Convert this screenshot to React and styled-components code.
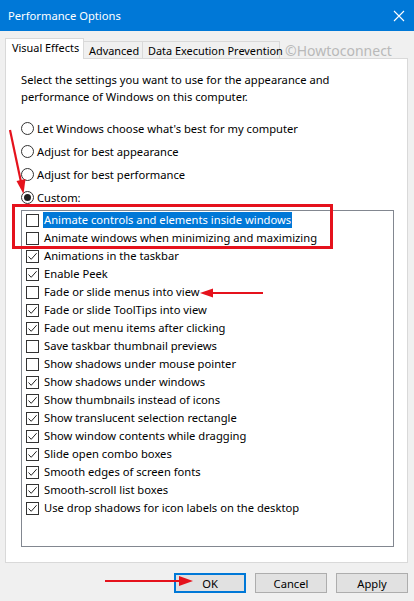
import React from 'react';
import styled, { createGlobalStyle } from 'styled-components';

const GlobalStyle = createGlobalStyle`
  html, body {
    margin: 0;
    padding: 0;
    background: #f0f0f0;
  }
`;

const effects = [
  { label: 'Animate controls and elements inside windows', checked: false, selected: true },
  { label: 'Animate windows when minimizing and maximizing', checked: false },
  { label: 'Animations in the taskbar', checked: true },
  { label: 'Enable Peek', checked: true },
  { label: 'Fade or slide menus into view', checked: false },
  { label: 'Fade or slide ToolTips into view', checked: true },
  { label: 'Fade out menu items after clicking', checked: true },
  { label: 'Save taskbar thumbnail previews', checked: false },
  { label: 'Show shadows under mouse pointer', checked: false },
  { label: 'Show shadows under windows', checked: true },
  { label: 'Show thumbnails instead of icons', checked: true },
  { label: 'Show translucent selection rectangle', checked: true },
  { label: 'Show window contents while dragging', checked: true },
  { label: 'Slide open combo boxes', checked: true },
  { label: 'Smooth edges of screen fonts', checked: true },
  { label: 'Smooth-scroll list boxes', checked: true },
  { label: 'Use drop shadows for icon labels on the desktop', checked: true },
];

const radios = [
  { label: "Let Windows choose what's best for my computer" },
  { label: 'Adjust for best appearance' },
  { label: 'Adjust for best performance' },
  { label: 'Custom:', on: true },
];

const tabs = [
  { label: 'Visual Effects', width: 79, active: true },
  { label: 'Advanced', width: 60 },
  { label: 'Data Execution Prevention', width: 138 },
];

const App = () => {
  return (
    <Dialog>
      <GlobalStyle />
      <TitleBar>
        <span>Performance Options</span>
        <svg width="12" height="12" viewBox="0 0 12 12">
          <path d="M1 1 L11 11 M11 1 L1 11" stroke="#fff" strokeWidth="1.1" />
        </svg>
      </TitleBar>

      <TabStrip>
        {tabs.map(t => (
          <Tab key={t.label} $active={t.active} $width={t.width}>{t.label}</Tab>
        ))}
        <Watermark>©Howtoconnect</Watermark>
      </TabStrip>

      <Panel>
        <Intro>
          Select the settings you want to use for the appearance and<br />
          performance of Windows on this computer.
        </Intro>

        <RadioList>
          {radios.map(r => (
            <RadioRow key={r.label}>
              <Radio $on={r.on} />
              {r.label}
            </RadioRow>
          ))}
        </RadioList>

        <ListBox>
          {effects.map(e => (
            <CheckRow key={e.label}>
              <CheckBox>
                {e.checked && (
                  <svg width="11" height="11" viewBox="0 0 11 11">
                    <path d="M1.5 5.5 L4.2 8.3 L9.6 2.2" fill="none" stroke="#222" strokeWidth="1" />
                  </svg>
                )}
              </CheckBox>
              <Label $selected={e.selected}>{e.label}</Label>
            </CheckRow>
          ))}
        </ListBox>
      </Panel>

      <ButtonRow>
        <Button $default>OK</Button>
        <Button>Cancel</Button>
        <Button>Apply</Button>
      </ButtonRow>

      <RedBox />
      <Arrows width="414" height="601" viewBox="0 0 414 601">
        <g stroke="#e5121c" strokeWidth="2.2" fill="#e5121c">
          <line x1="10" y1="130" x2="21" y2="182" />
          <polygon points="23.5,194 16.5,181 25.5,179" stroke="none" />
          <line x1="263" y1="293" x2="212" y2="293" />
          <polygon points="200,293 213,288.5 213,297.5" stroke="none" />
          <line x1="105" y1="581" x2="180" y2="581" />
          <polygon points="193,581 179,576 179,586" stroke="none" />
        </g>
      </Arrows>
    </Dialog>
  );
};

export default App;

const Dialog = styled.div`
  position: relative;
  width: 414px;
  height: 601px;
  overflow: hidden;
  background: #f0f0f0;
  font-family: "Noto Sans", "Open Sans", sans-serif;
  font-size: 11.2px;
  color: #000;
`;

const TitleBar = styled.div`
  height: 31px;
  background: #0078d7;
  color: #fff;
  display: flex;
  align-items: center;
  justify-content: space-between;
  padding: 0 9px 0 8px;
  font-size: 11.2px;
`;

const TabStrip = styled.div`
  display: flex;
  align-items: flex-end;
  height: 20px;
  margin-top: 7px;
  padding-left: 5px;
`;

const Tab = styled.div`
  position: relative;
  z-index: 1;
  box-sizing: border-box;
  width: ${p => p.$width}px;
  height: ${p => (p.$active ? 21 : 17)}px;
  margin-bottom: ${p => (p.$active ? -1 : 0)}px;
  margin-right: -1px;
  border: 1px solid #d9d9d9;
  border-bottom: none;
  background: ${p => (p.$active ? '#fff' : '#f0f0f0')};
  display: flex;
  align-items: center;
  padding-left: ${p => (p.$active ? 6 : 5)}px;
  padding-bottom: ${p => (p.$active ? 3 : 0)}px;
  font-size: 10.9px;
  white-space: nowrap;
`;

const Watermark = styled.div`
  margin-left: 6px;
  align-self: center;
  padding-top: 4px;
  color: #b9b9b9;
  font-size: 14px;
`;

const Panel = styled.div`
  box-sizing: border-box;
  height: 505px;
  margin: 0 6px 0 5px;
  padding: 12px 0 0 15px;
  background: #fff;
  border: 1px solid #d9d9d9;
`;

const Intro = styled.div`
  line-height: 17px;
`;

const RadioList = styled.div`
  margin-top: 12px;
`;

const RadioRow = styled.div`
  height: 23px;
  display: flex;
  align-items: center;
`;

const Radio = styled.span`
  box-sizing: border-box;
  width: 13px;
  height: 13px;
  border-radius: 50%;
  border: 1px solid #333;
  margin-right: 3px;
  display: flex;
  align-items: center;
  justify-content: center;

  &::after {
    content: '';
    display: ${p => (p.$on ? 'block' : 'none')};
    width: 7px;
    height: 7px;
    border-radius: 50%;
    background: #222;
  }
`;

const ListBox = styled.div`
  box-sizing: border-box;
  width: 373px;
  height: 337px;
  margin-top: 1px;
  border: 1px solid #828790;
  background: #fff;
`;

const CheckRow = styled.div`
  height: 18px;
  display: flex;
  align-items: center;
  padding-left: 4px;
`;

const CheckBox = styled.span`
  box-sizing: border-box;
  width: 13px;
  height: 13px;
  border: 1px solid #333;
  margin-right: 4px;
  display: flex;
  align-items: center;
  justify-content: center;
  background: #fff;
`;

const Label = styled.span`
  height: 16px;
  line-height: 16px;
  padding: 0 1px;
  white-space: nowrap;
  background: ${p => (p.$selected ? '#0078d7' : 'transparent')};
  color: ${p => (p.$selected ? '#fff' : '#000')};
`;

const ButtonRow = styled.div`
  display: flex;
  justify-content: flex-end;
  gap: 9px;
  margin-top: 10px;
  padding-right: 6px;
`;

const Button = styled.button`
  box-sizing: border-box;
  width: 72px;
  height: 20px;
  padding: 0;
  font-family: inherit;
  font-size: 11.2px;
  font-weight: 400;
  color: #000;
  background: #e1e1e1;
  border: ${p => (p.$default ? '2px solid #0078d7' : '1px solid #adadad')};
`;

const RedBox = styled.div`
  position: absolute;
  left: 12px;
  top: 204px;
  width: 321px;
  height: 45px;
  box-sizing: border-box;
  border: 3px solid #e5121c;
  pointer-events: none;
`;

const Arrows = styled.svg`
  position: absolute;
  left: 0;
  top: 0;
  pointer-events: none;
`;
